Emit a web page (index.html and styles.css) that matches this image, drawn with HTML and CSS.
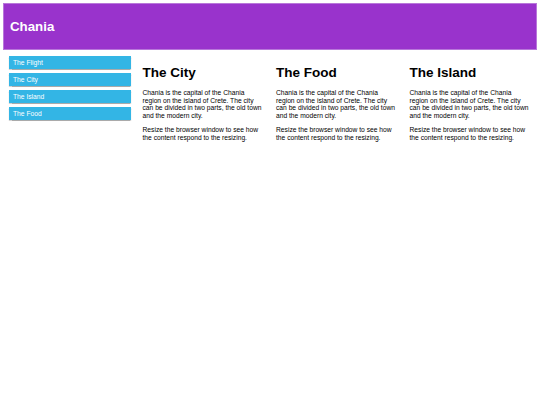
FILE: index.html
```html
<!DOCTYPE html>
<html lang="en">
<head>
    <meta charset="UTF-8">
    <title>Chania</title>
    <link rel="stylesheet" href="styles.css">
</head>
<body>

    <div class="header">
        <h1>Chania</h1>
    </div>

    <div class="row">
        <div class="col menu">
            <ul>
                <li>The Flight</li>
                <li>The City</li>
                <li>The Island</li>
                <li>The Food</li>
            </ul>
        </div>

        <div class="col">
            <h2>The City</h2>
            <p>Chania is the capital of the Chania region on the island of Crete. The city can be divided in two parts, the old town and the modern city.</p>
            <p>Resize the browser window to see how the content respond to the resizing.</p>
        </div>

        <div class="col">
            <h2>The Food</h2>
            <p>Chania is the capital of the Chania region on the island of Crete. The city can be divided in two parts, the old town and the modern city.</p>
            <p>Resize the browser window to see how the content respond to the resizing.</p>
        </div>

        <div class="col">
            <h2>The Island</h2>
            <p>Chania is the capital of the Chania region on the island of Crete. The city can be divided in two parts, the old town and the modern city.</p>
            <p>Resize the browser window to see how the content respond to the resizing.</p>
        </div>
    </div>

</body>
</html>
```

FILE: styles.css
```css
* {
    box-sizing: border-box;
}

body {
    margin: 3px;
    font-family: "Liberation Sans", Arial, sans-serif;
    font-size: 6.7px;
    color: #000;
    background-color: #fff;
}

.header {
    background-color: #9933cc;
    color: #ffffff;
    border: 1px solid #b877da;
    padding: 6px;
}

.header h1 {
    font-size: 13.3px;
    margin: 9px 0;
}

.row {
    display: flex;
}

.col {
    width: 25%;
    padding: 6px;
}

.menu ul {
    list-style-type: none;
    margin: 0;
    padding: 0;
}

.menu li {
    padding: 3px 4px;
    line-height: 7px;
    margin-bottom: 4px;
    background-color: #33b5e5;
    color: #fff;
    box-shadow: 0 0.5px 1px rgba(0,0,0,0.12), 0 0.5px 1px rgba(0,0,0,0.24);
}

.col h2 {
    font-size: 13.5px;
    margin: 9px 0;
}

.col p {
    margin: 7px 0;
    line-height: 7.5px;
}
```
